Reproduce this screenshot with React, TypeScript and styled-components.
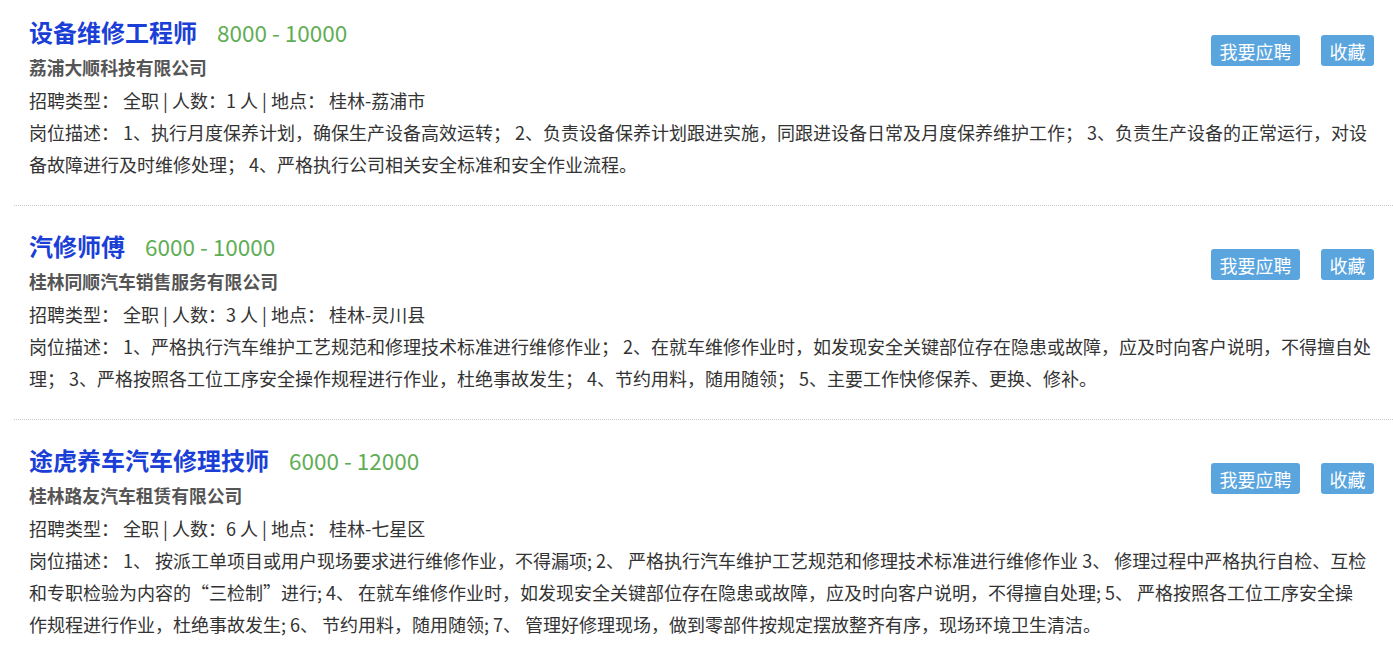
import React from "react";
import styled, { createGlobalStyle } from "styled-components";

type Job = {
	title: string;
	salary: string;
	company: string;
	count: number;
	place: string;
	desc: string[];
};

const jobs: Job[] = [
	{
		title: "设备维修工程师",
		salary: "8000 - 10000",
		company: "荔浦大顺科技有限公司",
		count: 1,
		place: "桂林-荔浦市",
		desc: [
			"岗位描述： 1、执行月度保养计划，确保生产设备高效运转； 2、负责设备保养计划跟进实施，同跟进设备日常及月度保养维护工作； 3、负责生产设备的正常运行，对设",
			"备故障进行及时维修处理； 4、严格执行公司相关安全标准和安全作业流程。",
		],
	},
	{
		title: "汽修师傅",
		salary: "6000 - 10000",
		company: "桂林同顺汽车销售服务有限公司",
		count: 3,
		place: "桂林-灵川县",
		desc: [
			"岗位描述： 1、严格执行汽车维护工艺规范和修理技术标准进行维修作业； 2、在就车维修作业时，如发现安全关键部位存在隐患或故障，应及时向客户说明，不得擅自处",
			"理； 3、严格按照各工位工序安全操作规程进行作业，杜绝事故发生； 4、节约用料，随用随领； 5、主要工作快修保养、更换、修补。",
		],
	},
	{
		title: "途虎养车汽车修理技师",
		salary: "6000 - 12000",
		company: "桂林路友汽车租赁有限公司",
		count: 6,
		place: "桂林-七星区",
		desc: [
			"岗位描述： 1、 按派工单项目或用户现场要求进行维修作业，不得漏项; 2、 严格执行汽车维护工艺规范和修理技术标准进行维修作业 3、 修理过程中严格执行自检、互检",
			"和专职检验为内容的“三检制”进行; 4、 在就车维修作业时，如发现安全关键部位存在隐患或故障，应及时向客户说明，不得擅自处理; 5、 严格按照各工位工序安全操",
			"作规程进行作业，杜绝事故发生; 6、 节约用料，随用随领; 7、 管理好修理现场，做到零部件按规定摆放整齐有序，现场环境卫生清洁。",
		],
	},
];

const App = () => {
	return (
		<>
			<GlobalStyle />
			<JobList>
				{jobs.map((job) => (
					<JobItem key={job.title}>
						<JobHeader>
							<div>
								<TitleRow>
									<JobTitle>{job.title}</JobTitle>
									<Salary>{job.salary}</Salary>
								</TitleRow>
								<Company>{job.company}</Company>
							</div>
							<Actions>
								<ActionButton>我要应聘</ActionButton>
								<ActionButton>收藏</ActionButton>
							</Actions>
						</JobHeader>
						<InfoLine>
							招聘类型： 全职 | 人数：{job.count} 人 | 地点： {job.place}
						</InfoLine>
						<Description>
							{job.desc.map((line, i) => (
								<DescLine key={i}>{line}</DescLine>
							))}
						</Description>
					</JobItem>
				))}
			</JobList>
		</>
	);
};

const GlobalStyle = createGlobalStyle`
	body {
		margin: 0;
		background: #fff;
		font-family: "Noto Sans CJK SC", "Noto Sans", sans-serif;
		color: #333;
		overflow: hidden;
	}
`;

const JobList = styled.div`
	margin-left: 14px;
	margin-top: -8px;
`;

const JobItem = styled.div`
	padding: 22px 19px 25px 15px;
	border-bottom: 1px dotted #c8c8c8;
`;

const JobHeader = styled.div`
	display: flex;
	justify-content: space-between;
	align-items: center;
`;

const TitleRow = styled.div`
	display: flex;
	align-items: baseline;
	height: 36px;
	line-height: 36px;
`;

const JobTitle = styled.span`
	font-size: 24px;
	font-weight: bold;
	color: #1b3fd6;
`;

const Salary = styled.span`
	margin-left: 20px;
	font-size: 22.5px;
	color: #5fae55;
`;

const Company = styled.div`
	font-size: 17.8px;
	font-weight: bold;
	color: #555;
	line-height: 34px;
`;

const Actions = styled.div`
	display: flex;
	gap: 21px;
	margin-top: 3px;
`;

const ActionButton = styled.button`
	border: none;
	outline: none;
	background: #5ba5df;
	color: #fff;
	height: 31px;
	padding: 0 8.5px;
	border-radius: 3px;
	font-family: "Noto Sans CJK SC", sans-serif;
	font-size: 18px;
	cursor: pointer;
`;

const InfoLine = styled.div`
	font-size: 18px;
	line-height: 32px;
	white-space: pre;
`;

const Description = styled.div`
	font-size: 18px;
	line-height: 32px;
`;

const DescLine = styled.div`
	white-space: pre;
`;

export default App;
